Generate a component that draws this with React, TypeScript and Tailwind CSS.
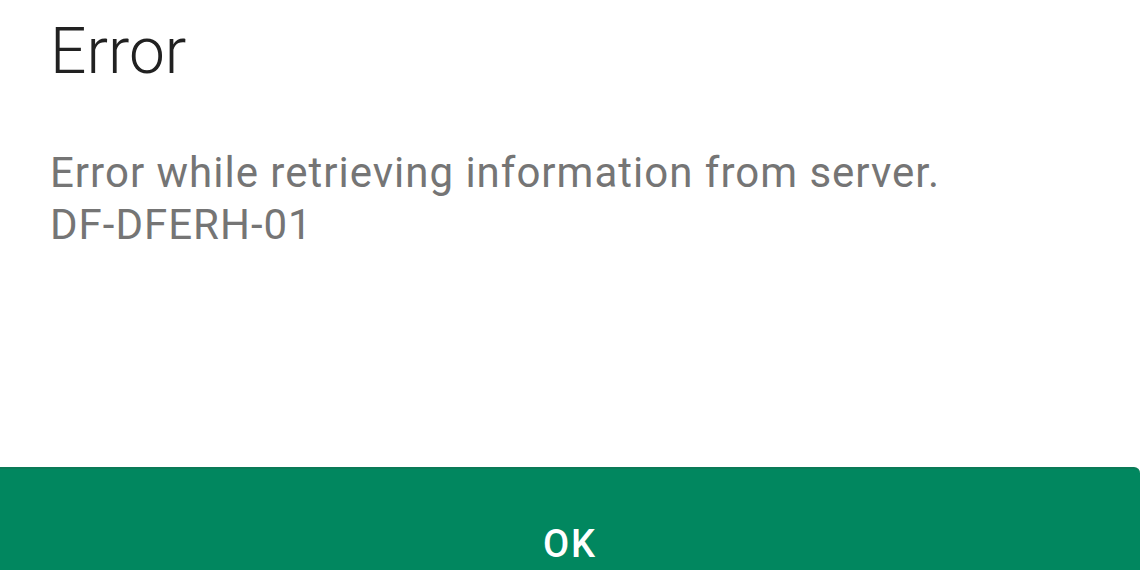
import React from "react";

export default function App() {
  return (
    <div
      className="w-[1140px] h-[570px] bg-white flex flex-col overflow-hidden"
      style={{ fontFamily: "Roboto, 'Noto Sans', sans-serif" }}
    >
      <div className="flex-1 pl-[50px]">
        <h1 className="text-[64px] leading-none font-light text-[#212121] pt-[20px]">Error</h1>
        <p className="mt-[63px] text-[42px] leading-[52px] tracking-[1px] text-[#757575]">
          Error while retrieving information from server.
          <br />
          DF-DFERH-01
        </p>
      </div>
      <button className="h-[103px] w-full bg-[#01875f] rounded-tr-[6px] border-t-2 border-[#0b7a57] flex items-start justify-center pt-[56px] text-white text-[38px] tracking-[2px] font-medium leading-none">
        OK
      </button>
    </div>
  );
}
